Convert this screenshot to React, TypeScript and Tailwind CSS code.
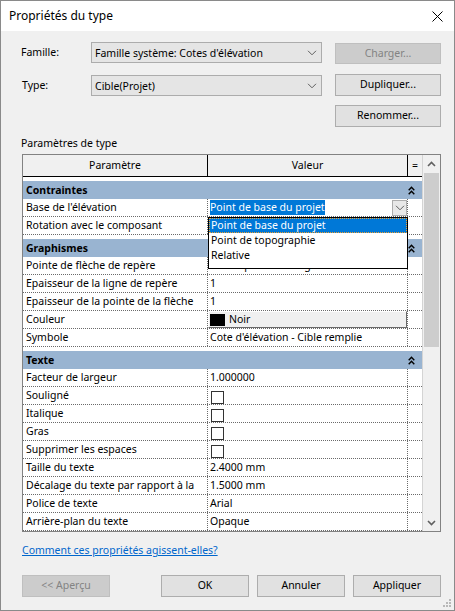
import React from "react";

type DataRow = { label: string; value?: React.ReactNode; flush?: boolean };
type Section = { title: string; rows: DataRow[] };

const Chevron = ({ className = "" }: { className?: string }) => (
  <svg width="10" height="6" viewBox="0 0 10 6" className={className}>
    <path d="M1 0.8 L5 4.8 L9 0.8" fill="none" stroke="#606060" strokeWidth="1" />
  </svg>
);

const DoubleUp = () => (
  <svg width="7" height="9" viewBox="0 0 7 9">
    <path d="M0.7 4.3 L3.5 1.3 L6.3 4.3" fill="none" stroke="#000" strokeWidth="1.4" />
    <path d="M0.7 8.3 L3.5 5.3 L6.3 8.3" fill="none" stroke="#000" strokeWidth="1.4" />
  </svg>
);

const CheckBox = () => (
  <div className="ml-[1px] mt-[4px] h-[13px] w-[13px] border border-[#333333] bg-white" />
);

const ColorButton = () => (
  <div className="flex h-full w-full items-center border border-t-white border-l-white border-r-[#696969] border-b-[#696969] bg-[#f0f0f0]">
    <div className="ml-[1px] h-[12px] w-[15px] bg-black" />
    <span className="ml-[4px] leading-[15px]">Noir</span>
  </div>
);

const BaseCombo = () => (
  <div className="flex h-full items-center">
    <span className="bg-[#0078d7] leading-[15px] text-white">Point de base du projet</span>
    <div className="ml-auto flex h-[16px] w-[15px] items-center justify-center border border-[#adadad] bg-[#e8e8e8]">
      <Chevron />
    </div>
    <div className="absolute left-0 top-[18px] z-10 h-[52px] w-[200px] border border-black bg-white">
      <div className="h-[15px] border border-dotted border-[#f0a030] bg-[#0078d7] pl-[1px] leading-[13px] text-white">
        Point de base du projet
      </div>
      <div className="h-[15px] pl-[2px] leading-[15px]">Point de topographie</div>
      <div className="h-[15px] pl-[2px] leading-[15px]">Relative</div>
    </div>
  </div>
);

const sections: Section[] = [
  {
    title: "Contraintes",
    rows: [
      { label: "Base de l'élévation", value: <BaseCombo /> },
      { label: "Rotation avec le composant" },
    ],
  },
  {
    title: "Graphismes",
    rows: [
      { label: "Pointe de flèche de repère", value: "Flèche pleine 30 degrés" },
      { label: "Epaisseur de la ligne de repère", value: "1" },
      { label: "Epaisseur de la pointe de la flèche", value: "1" },
      { label: "Couleur", value: <ColorButton />, flush: true },
      { label: "Symbole", value: "Cote d'élévation - Cible remplie" },
    ],
  },
  {
    title: "Texte",
    rows: [
      { label: "Facteur de largeur", value: "1.000000" },
      { label: "Souligné", value: <CheckBox /> },
      { label: "Italique", value: <CheckBox /> },
      { label: "Gras", value: <CheckBox /> },
      { label: "Supprimer les espaces", value: <CheckBox /> },
      { label: "Taille du texte", value: "2.4000 mm" },
      { label: "Décalage du texte par rapport à la", value: "1.5000 mm" },
      { label: "Police de texte", value: "Arial" },
      { label: "Arrière-plan du texte", value: "Opaque" },
    ],
  },
];

const WinButton = ({
  children,
  disabled,
  className = "",
}: {
  children: React.ReactNode;
  disabled?: boolean;
  className?: string;
}) => (
  <button
    className={
      "flex items-center justify-center border text-[10.5px] " +
      (disabled
        ? "border-[#bfbfbf] bg-[#cccccc] text-[#838383] "
        : "border-[#adadad] bg-[#e1e1e1] text-black ") +
      className
    }
  >
    {children}
  </button>
);

const Combo = ({ text, className = "" }: { text: string; className?: string }) => (
  <div
    className={
      "flex h-[21px] w-[231px] items-center border border-[#acacac] bg-[#e5e5e5] pl-[3px] pr-[4px] " + className
    }
  >
    <span className="flex-1 leading-[14px]">{text}</span>
    <Chevron />
  </div>
);

const App = () => {
  return (
    <div className="flex h-[611px] w-[455px] flex-col border border-[#8a8a8a] bg-[#f0f0f0] font-['Noto_Sans','Liberation_Sans',sans-serif] text-[10.5px] text-black">
      {/* title bar */}
      <div className="flex h-[30px] shrink-0 items-center justify-between bg-white pl-[8px] pr-[11px]">
        <span className="text-[12px] leading-[16px]">Propriétés du type</span>
        <svg width="11" height="11" viewBox="0 0 11 11">
          <path d="M0.5 0.5 L10.5 10.5 M10.5 0.5 L0.5 10.5" stroke="#000" strokeWidth="1" />
        </svg>
      </div>

      <div className="flex flex-1 flex-col pl-[20px] pr-[13px]">
        {/* famille */}
        <div className="mt-[11px] flex h-[22px] items-start">
          <span className="w-[70px] leading-[21px]">Famille:</span>
          <Combo text="Famille système: Cotes d'élévation" />
          <WinButton disabled className="ml-[13px] mt-[1px] h-[21px] w-[106px]">
            Charger...
          </WinButton>
        </div>

        {/* type */}
        <div className="mt-[10px] flex h-[22px] items-start">
          <span className="mt-[1px] w-[70px] pl-[1px] leading-[21px]">Type:</span>
          <Combo text="Cible(Projet)" className="mt-[1px]" />
          <WinButton className="ml-[13px] h-[22px] w-[106px]">Dupliquer...</WinButton>
        </div>

        <div className="mt-[9px] flex justify-end">
          <WinButton className="h-[22px] w-[106px]">Renommer...</WinButton>
        </div>

        <div className="mt-[9px] h-[14px] leading-[14px]">Paramètres de type</div>

        {/* property grid */}
        <div className="ml-[1px] mt-[4px] flex h-[378px] w-[419px] border border-[#828282] bg-white">
          <div className="flex w-[400px] flex-col overflow-hidden border-r border-[#d4d4d4]">
            <div className="flex h-[22px] shrink-0 border-b border-black bg-[#f0f0f0]">
              <div className="flex w-[184px] items-center justify-center">Paramètre</div>
              <div className="flex w-[200px] items-center justify-center border-l border-black">Valeur</div>
              <div className="flex w-[15px] items-center justify-center border-l border-black">=</div>
            </div>
            {sections.map((s) => (
              <div key={s.title} className="pt-[4px]">
                <div className="flex h-[18px] items-center bg-[#99b4d1]">
                  <span className="w-[384px] pl-[3px] font-bold leading-[18px]">{s.title}</span>
                  <div className="flex w-[15px] pl-[1px]">
                    <DoubleUp />
                  </div>
                </div>
                {s.rows.map((r) => (
                  <div key={r.label} className="flex h-[18px] border-b border-dotted border-[#6a6a6a]">
                    <div className="w-[184px] overflow-hidden whitespace-nowrap pl-[3px] leading-[17px]">
                      {r.label}
                    </div>
                    <div
                      className={
                        "relative w-[200px] whitespace-nowrap border-l border-dotted border-[#6a6a6a] leading-[17px] " +
                        (r.flush ? "" : "pl-[2px]")
                      }
                    >
                      {r.value}
                    </div>
                    <div className="w-[15px] border-l border-dotted border-[#6a6a6a]" />
                  </div>
                ))}
              </div>
            ))}
          </div>

          {/* scrollbar */}
          <div className="flex w-[17px] flex-col bg-[#f0f0f0]">
            <div className="flex h-[17px] items-center justify-center">
              <svg width="9" height="6" viewBox="0 0 9 6">
                <path d="M1 5 L4.5 1.5 L8 5" fill="none" stroke="#606060" strokeWidth="1.6" />
              </svg>
            </div>
            <div className="mx-[1px] mt-[1px] h-[174px] bg-[#cdcdcd]" />
            <div className="flex-1" />
            <div className="flex h-[17px] items-center justify-center">
              <svg width="9" height="6" viewBox="0 0 9 6">
                <path d="M1 1 L4.5 4.5 L8 1" fill="none" stroke="#606060" strokeWidth="1.6" />
              </svg>
            </div>
          </div>
        </div>

        <div className="ml-[1px] mt-[11px] h-[14px] leading-[14px]">
          <span className="text-[#0066cc] underline">Comment ces propriétés agissent-elles?</span>
        </div>

        <div className="mt-[18px] flex h-[22px] pl-[1px]">
          <WinButton disabled className="h-[22px] w-[88px]">
            &lt;&lt; Aperçu
          </WinButton>
          <div className="flex-1" />
          <div className="flex gap-[8px]">
            <WinButton className="h-[22px] w-[88px]">OK</WinButton>
            <WinButton className="h-[22px] w-[88px]">Annuler</WinButton>
            <WinButton className="h-[22px] w-[88px]">Appliquer</WinButton>
          </div>
        </div>

        <div className="flex flex-1 items-end justify-end">
          <svg width="9" height="9" viewBox="0 0 9 9" className="-mr-[11px] mb-[2px]">
            <rect x="6" y="0" width="2" height="2" fill="#b8b8b8" />
            <rect x="3" y="3" width="2" height="2" fill="#b8b8b8" />
            <rect x="6" y="3" width="2" height="2" fill="#b8b8b8" />
            <rect x="0" y="6" width="2" height="2" fill="#b8b8b8" />
            <rect x="3" y="6" width="2" height="2" fill="#b8b8b8" />
            <rect x="6" y="6" width="2" height="2" fill="#b8b8b8" />
          </svg>
        </div>
      </div>
    </div>
  );
};

export default App;
